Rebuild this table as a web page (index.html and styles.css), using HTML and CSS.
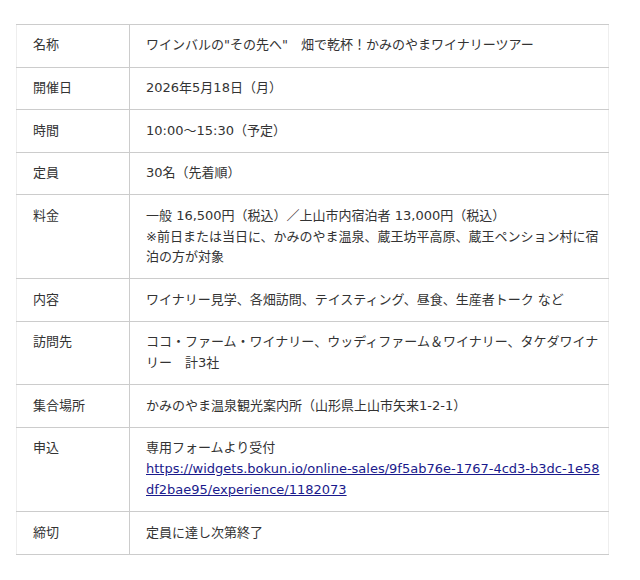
FILE: index.html
```html
<!DOCTYPE html>
<html lang="ja">

<head>
    <meta charset="utf-8">
    <meta name="viewport" content="width=device-width, initial-scale=1.0">
    <title>かみのやまワイナリーツアー</title>
    <link rel="stylesheet" href="styles.css">
</head>

<body>
    <div class="indhold">
        <table class="tour">
            <tr>
                <th>名称</th>
                <td>ワインバルの"その先へ"　畑で乾杯！かみのやまワイナリーツアー</td>
            </tr>
            <tr>
                <th>開催日</th>
                <td>2026年5月18日（月）</td>
            </tr>
            <tr>
                <th>時間</th>
                <td>10:00～15:30（予定）</td>
            </tr>
            <tr>
                <th>定員</th>
                <td>30名（先着順）</td>
            </tr>
            <tr>
                <th>料金</th>
                <td>一般 16,500円（税込）／上山市内宿泊者 13,000円（税込）<br>※前日または当日に、かみのやま温泉、蔵王坊平高原、蔵王ペンション村に宿泊の方が対象</td>
            </tr>
            <tr>
                <th>内容</th>
                <td>ワイナリー見学、各畑訪問、テイスティング、昼食、生産者トーク など</td>
            </tr>
            <tr>
                <th>訪問先</th>
                <td>ココ・ファーム・ワイナリー、ウッディファーム＆ワイナリー、タケダワイナリー　計3社</td>
            </tr>
            <tr>
                <th>集合場所</th>
                <td>かみのやま温泉観光案内所（山形県上山市矢来1-2-1）</td>
            </tr>
            <tr>
                <th>申込</th>
                <td>専用フォームより受付<br><a href="#">https://widgets.bokun.io/online-sales/9f5ab76e-1767-4cd3-b3dc-1e58df2bae95/experience/1182073</a></td>
            </tr>
            <tr>
                <th>締切</th>
                <td>定員に達し次第終了</td>
            </tr>
        </table>
    </div>
</body>

</html>
```

FILE: styles.css
```css
* {
    box-sizing: border-box;
}

body {
    margin: 0;
    background-color: white;
    font-family: "DejaVu Sans", "Noto Sans CJK JP", sans-serif;
    font-size: 13px;
    color: #333;
}

.indhold {
    padding: 24px 31px 0 16px;
}

.tour {
    width: 100%;
    border-collapse: collapse;
    border-left: 1px solid #eee;
    border-right: 1px solid #eee;
}

.tour tr {
    border-top: 1px solid #ccc;
    border-bottom: 1px solid #ccc;
}

.tour th,
.tour td {
    padding: 0.8em 6px 0.8em 16px;
    line-height: 1.6;
    text-align: left;
    vertical-align: top;
    font-weight: normal;
}

.tour th {
    width: 113px;
    border-right: 1px solid #ccc;
}

.tour td {
    word-break: break-all;
}

.tour a {
    color: #1a1a8c;
}
```
